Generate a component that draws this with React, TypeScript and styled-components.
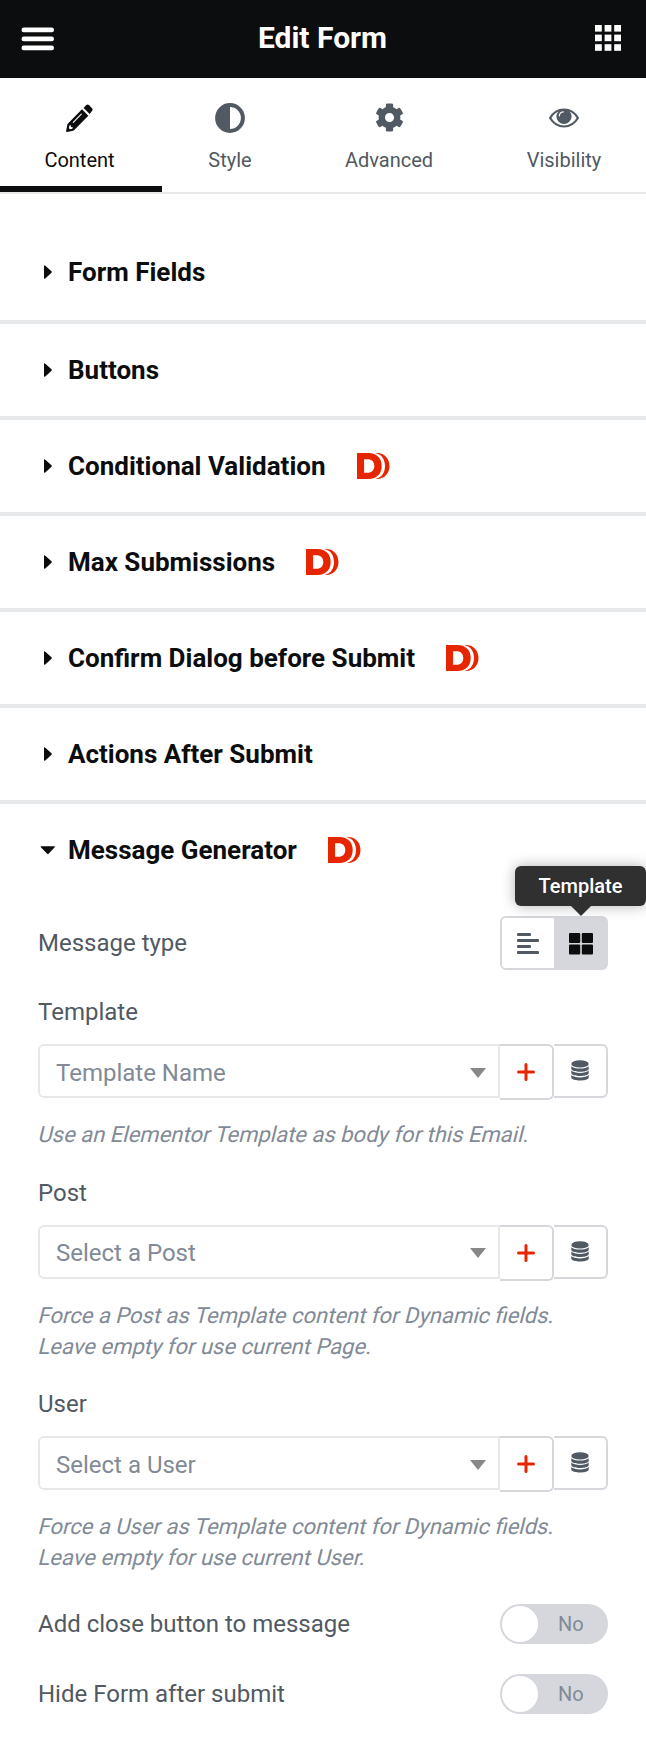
import React from "react";
import styled, { createGlobalStyle } from "styled-components";
import { FaCog } from "react-icons/fa";

const ink = "#0c0d0e";
const slate = "#515962";
const muted = "#818a96";
const line = "#e6e8ea";
const control = "#d5d7dc";
const red = "#e52600";

const GlobalStyle = createGlobalStyle`
  * { box-sizing: border-box; }
  body { margin: 0; background: #fff; overflow-x: hidden; }
  button { font: inherit; padding: 0; margin: 0; cursor: pointer; }
  svg { display: block; flex: none; }
`;

const Panel = styled.div`
  width: 646px;
  height: 1740px;
  overflow: hidden;
  background: #fff;
  color: ${slate};
  font-family: Roboto, sans-serif;
  font-size: 24px;
  line-height: 28px;
`;

const Header = styled.header`
  display: flex;
  align-items: center;
  justify-content: space-between;
  height: 78px;
  padding: 0 25px 0 21px;
  background: ${ink};
  color: #fff;
`;

const Title = styled.h1`
  margin: 0 4px 2px 0;
  font-size: 30px;
  font-weight: 700;
  line-height: 34px;
`;

const Tabs = styled.nav`
  display: grid;
  grid-template-columns: 162px 136px 182px 168px;
  height: 116px;
  border-bottom: 2px solid ${line};
`;

const Tab = styled.button<{ $active?: boolean }>`
  display: flex;
  flex-direction: column;
  align-items: center;
  padding: 24px ${(p) => (p.$active ? 3 : 0)}px 0 0;
  border: 0;
  border-bottom: 6px solid ${(p) => (p.$active ? ink : "transparent")};
  background: none;
  color: ${(p) => (p.$active ? ink : slate)};
  font-size: 20px;
  line-height: 24px;
`;

const TabIcon = styled.span`
  display: flex;
  align-items: center;
  justify-content: center;
  height: 32px;
  padding-bottom: 1px;
  margin-bottom: 14px;
`;

const Sections = styled.main`
  padding-top: 30px;
`;

const SectionHead = styled.div<{ $open?: boolean }>`
  display: flex;
  align-items: center;
  height: ${(p) => (p.$open ? 92 : 96)}px;
  padding-left: 40px;
  border-bottom: ${(p) => (p.$open ? "0" : `4px solid ${line}`)};
  color: ${ink};

  &:first-child {
    height: 100px;
  }

  svg + h2 {
    margin-left: 12px;
  }

  h2 + svg {
    margin-left: 31px;
  }
`;

const SectionTitle = styled.h2`
  margin: 0;
  font-size: 26px;
  font-weight: 700;
  line-height: 32px;
`;

const Body = styled.div`
  padding: 20px 38px 0;
`;

const Row = styled.div<{ $gap: number }>`
  display: flex;
  align-items: center;
  justify-content: space-between;
  margin-bottom: ${(p) => p.$gap}px;
`;

const Choices = styled.div`
  position: relative;
  display: flex;
  width: 108px;
  height: 54px;
  border: 2px solid ${control};
  border-radius: 6px;
`;

const Choice = styled.button<{ $on?: boolean }>`
  flex: none;
  width: 52px;
  display: flex;
  align-items: center;
  justify-content: center;
  border: 0;
  padding: 2px 0 0 ${(p) => (p.$on ? 2 : 0)}px;
  background: ${(p) => (p.$on ? control : "#fff")};
  border-radius: ${(p) => (p.$on ? "0" : "4px 0 0 4px")};
`;

const Tooltip = styled.div`
  position: absolute;
  left: 13px;
  top: -52px;
  width: 131px;
  height: 40px;
  border-radius: 6px;
  background: #303030;
  box-shadow: 0 0 14px rgba(0, 0, 0, 0.3);
  color: #fff;
  font-size: 20px;
  font-weight: 500;
  line-height: 40px;
  text-align: center;

  &::after {
    content: "";
    position: absolute;
    left: 56px;
    top: 40px;
    border: 10px solid transparent;
    border-bottom: 0;
    border-top-color: #303030;
  }
`;

const Field = styled.div`
  margin-bottom: 28px;
`;

const Label = styled.div`
  color: ${slate};
`;

const Combo = styled.div`
  display: flex;
  align-items: flex-start;
  height: 54px;
  margin-top: 18px;
`;

const Select = styled.div`
  flex: 1;
  display: flex;
  align-items: center;
  justify-content: space-between;
  height: 54px;
  padding: 3px 12px 0 16px;
  border: 2px solid ${line};
  border-radius: 6px 0 0 6px;
  color: ${muted};
`;

const SideButton = styled.button<{ $height: number }>`
  display: flex;
  align-items: center;
  justify-content: center;
  width: 54px;
  height: ${(p) => p.$height}px;
  border: 2px solid ${control};
  border-left: 0;
  border-radius: 0 6px 6px 0;
  background: #fff;
`;

const Hint = styled.p`
  margin: 22px 0 0 -1px;
  color: ${muted};
  font-size: 22px;
  line-height: 30.8px;
`;

/* Slants the upright face, which is wider than the true italic. */
const HintLine = styled.span`
  display: block;
  transform: skewX(-14deg);
  transform-origin: 0 75%;
`;

const Toggle = styled.button`
  display: flex;
  align-items: center;
  width: 108px;
  height: 40px;
  padding-left: 2px;
  border: 0;
  border-radius: 20px;
  background: ${control};
  color: ${muted};
  font-size: 20px;
  font-weight: 400;
  line-height: 24px;
`;

const Knob = styled.span`
  width: 36px;
  height: 36px;
  margin-right: 20px;
  border-radius: 50%;
  background: #fff;
`;

const Toggles = styled.div`
  padding-top: 2px;
`;

const MenuIcon = () => (
  <svg width="33" height="24" viewBox="0 0 33 24" fill="currentColor">
    <rect x="0.5" y="0.6" width="32.5" height="4.6" rx="2.3" />
    <rect x="0.5" y="9.6" width="32.5" height="4.6" rx="2.3" />
    <rect x="0.5" y="18.6" width="32.5" height="4.6" rx="2.3" />
  </svg>
);

const AppsIcon = () => (
  <svg width="26" height="28" viewBox="0 0 26 28" fill="currentColor">
    {[0, 9.6, 19.2].map((y) =>
      [0, 9.6, 19.2].map((x) => <rect key={`${x}-${y}`} x={x} y={y} width="6.8" height="6.6" />)
    )}
  </svg>
);

const PencilIcon = () => (
  <svg width="27" height="28" viewBox="0 0 27 28" fill="currentColor">
    <path d="M16 5.3L22.3 11.8L8.3 26.1Q7.9 26.5 7.3 26.7L1 28Q0 28 .1 27L1.3 20.7Q1.4 20 2 19.4Z" />
    <path d="M17.6 3.9L20.2 1.1Q21.6-.3 23 1.1L26 4.2Q27.3 5.6 26 7L23.7 9.9Z" />
    <path d="M3.4 21.6L4.6 20.9L5 22.9L7 23.4L6.3 24.7L4 25.2L2.9 24.2Z" fill="#fff" />
    <path d="M7.3 18.3L15.3 10.1" stroke="#fff" strokeWidth="1.1" strokeLinecap="round" />
  </svg>
);

const ContrastIcon = () => (
  <svg width="30" height="30" viewBox="0 0 30 30">
    <circle cx="15" cy="15" r="12.9" fill="none" stroke="currentColor" strokeWidth="4" />
    <path d="M15 2a13 13 0 0 0 0 26z" fill="currentColor" />
  </svg>
);

const EyeIcon = () => (
  <svg width="30" height="20" viewBox="0 0 30 20">
    <path
      d="M1.1 10C4.5 4.2 9.5 1.5 15 1.5S25.5 4.2 28.9 10C25.5 15.6 20.5 18.5 15 18.5S4.5 15.6 1.1 10Z"
      fill="none"
      stroke="currentColor"
      strokeWidth="2.2"
      strokeLinejoin="round"
    />
    <circle cx="15" cy="8.5" r="7.6" fill="currentColor" />
    <path d="M10.3 7.9A4.4 4.4 0 0 1 14.3 3.9" fill="none" stroke="#fff" strokeWidth="1.1" strokeLinecap="round" />
  </svg>
);

const Caret = ({ open }: { open?: boolean }) => (
  <svg width="16" height="16" viewBox="0 0 16 16" fill="currentColor">
    {open ? (
      <path d="M1.2 4.2h13.2q1 .3.3 1.1L8.6 11.8q-.7.7-1.4 0L.8 5.3q-.6-.8.4-1.1z" />
    ) : (
      <path d="M4 2.2q.1-1.5 1.3-.5l6.2 5.6q.8.7 0 1.4l-6.2 5.7q-1.2 1-1.3-.5z" />
    )}
  </svg>
);

const BrandMark = () => (
  <svg width="33" height="26" viewBox="0 0 33 26" fill={red}>
    <path
      fillRule="evenodd"
      d="M0 0H11.5C20 0 24.7 5.5 24.7 13S20 26 11.5 26H0ZM7.1 6.2V19.8H10.5C14.7 19.8 17.3 17.3 17.3 13S14.7 6.2 10.5 6.2Z"
    />
    <path d="M18.2 0.2C27 -0.9 32.5 5.6 32.5 13S27 26.9 18.2 25.8C25 24.9 28 19 28 13S25 1.1 18.2 0.2Z" />
  </svg>
);

const LinesIcon = () => (
  <svg width="22" height="22" viewBox="0 0 22 22" fill={slate}>
    <rect y="0" width="14" height="3" rx="1" />
    <rect y="6" width="22" height="3" rx="1" />
    <rect y="12" width="14" height="3" rx="1" />
    <rect y="18" width="22" height="3" rx="1" />
  </svg>
);

const BlocksIcon = () => (
  <svg width="24" height="22" viewBox="0 0 24 22" fill={ink}>
    <rect width="11.2" height="10" rx="1" />
    <rect x="12.8" width="11.2" height="10" rx="1" />
    <rect y="11.6" width="11.2" height="10" rx="1" />
    <rect x="12.8" y="11.6" width="11.2" height="10" rx="1" />
  </svg>
);

const ArrowIcon = () => (
  <svg width="16" height="10" viewBox="0 0 16 10" fill="#888">
    <path d="M0 0h16L8 10z" />
  </svg>
);

const PlusIcon = () => (
  <svg width="18" height="18" viewBox="0 0 18 18" stroke={red} strokeWidth="3" strokeLinecap="round">
    <path d="M9 1.5v15M1.5 9h15" />
  </svg>
);

const StackIcon = () => (
  <svg width="18" height="22" viewBox="0 0 18 22" fill={slate}>
    <ellipse cx="9" cy="3.9" rx="8.7" ry="3.7" />
    {[6.2, 10.6, 15].map((y) => (
      <path key={y} d={`M.3 ${y}C3 ${y + 3.2} 15 ${y + 3.2} 17.7 ${y}V${y + 2.7}C16.5 ${y + 6.4} 1.5 ${y + 6.4} .3 ${y + 2.7}Z`} />
    ))}
  </svg>
);

const sections = [
  { title: "Form Fields" },
  { title: "Buttons" },
  { title: "Conditional Validation", brand: true },
  { title: "Max Submissions", brand: true },
  { title: "Confirm Dialog before Submit", brand: true },
  { title: "Actions After Submit" },
  { title: "Message Generator", brand: true, open: true },
];

const fields = [
  { label: "Template", value: "Template Name", hint: ["Use an Elementor Template as body for this Email."] },
  {
    label: "Post",
    value: "Select a Post",
    hint: ["Force a Post as Template content for Dynamic fields.", "Leave empty for use current Page."],
  },
  {
    label: "User",
    value: "Select a User",
    hint: ["Force a User as Template content for Dynamic fields.", "Leave empty for use current User."],
  },
];

export default function App() {
  return (
    <Panel>
      <GlobalStyle />
      <Header>
        <MenuIcon />
        <Title>Edit Form</Title>
        <AppsIcon />
      </Header>
      <Tabs>
        <Tab $active>
          <TabIcon><PencilIcon /></TabIcon>
          Content
        </Tab>
        <Tab>
          <TabIcon><ContrastIcon /></TabIcon>
          Style
        </Tab>
        <Tab>
          <TabIcon><FaCog size={29} /></TabIcon>
          Advanced
        </Tab>
        <Tab>
          <TabIcon><EyeIcon /></TabIcon>
          Visibility
        </Tab>
      </Tabs>
      <Sections>
        {sections.map((s) => (
          <SectionHead key={s.title} $open={s.open}>
            <Caret open={s.open} />
            <SectionTitle>{s.title}</SectionTitle>
            {s.brand && <BrandMark />}
          </SectionHead>
        ))}
        <Body>
          <Row $gap={28}>
            <Label>Message type</Label>
            <Choices>
              <Choice><LinesIcon /></Choice>
              <Choice $on><BlocksIcon /></Choice>
              <Tooltip>Template</Tooltip>
            </Choices>
          </Row>
          {fields.map((f) => (
            <Field key={f.label}>
              <Label>{f.label}</Label>
              <Combo>
                <Select>
                  {f.value}
                  <ArrowIcon />
                </Select>
                <SideButton $height={56}><PlusIcon /></SideButton>
                <SideButton $height={54}><StackIcon /></SideButton>
              </Combo>
              <Hint>
                {f.hint.map((text) => (
                  <HintLine key={text}>{text}</HintLine>
                ))}
              </Hint>
            </Field>
          ))}
          <Toggles>
            <Row $gap={30}>
              <Label>Add close button to message</Label>
              <Toggle><Knob />No</Toggle>
            </Row>
            <Row $gap={0}>
              <Label>Hide Form after submit</Label>
              <Toggle><Knob />No</Toggle>
            </Row>
          </Toggles>
        </Body>
      </Sections>
    </Panel>
  );
}
